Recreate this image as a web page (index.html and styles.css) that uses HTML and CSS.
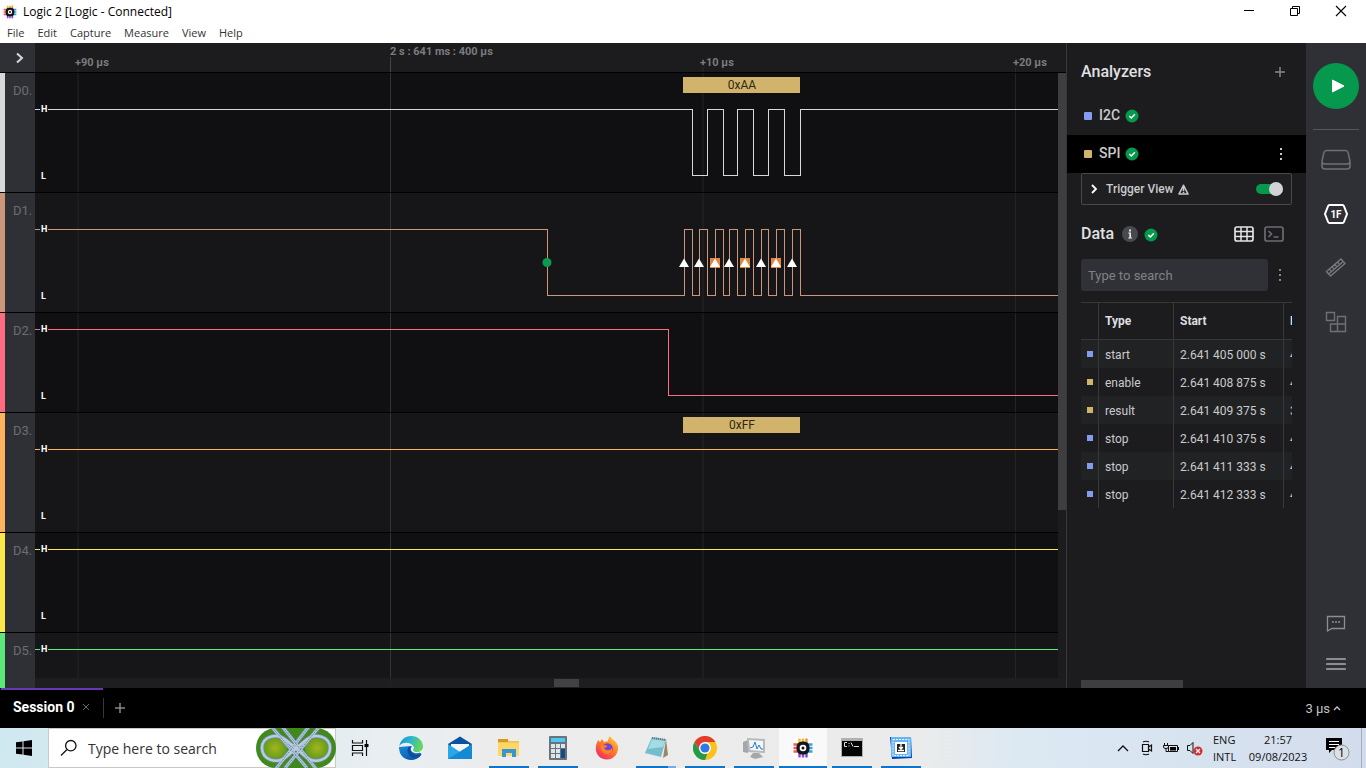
FILE: index.html
```html
<!DOCTYPE html>
<html lang="en">
<head>
<meta charset="utf-8">
<title>Logic 2 [Logic - Connected]</title>
<link rel="stylesheet" href="styles.css">
</head>
<body>
<svg class="defs" aria-hidden="true">
  <symbol id="logo" viewBox="0 0 24 24">
    <rect x="1" y="1" width="22" height="22" rx="5" fill="#fff" stroke="#ececec" stroke-width=".5"/>
    <path d="M8.500 2.500v5M12 2.500v5" stroke="#f3b52c" stroke-width="2.400"/><path d="M15.500 2.500v5" stroke="#ee8b2b" stroke-width="2.400"/>
    <path d="M8.500 16.500v5M12 16.500v5" stroke="#8e44d8" stroke-width="2.400"/><path d="M15.500 16.500v5" stroke="#6a4be0" stroke-width="2.400"/>
    <path d="M2.500 8.500h5M2.500 12h5M2.500 15.500h5" stroke="#ee5a4f" stroke-width="2.400"/>
    <path d="M16.500 8.500h5M16.500 12h5M16.500 15.500h5" stroke="#3a9fe0" stroke-width="2.400"/>
    <rect x="5.500" y="5.500" width="13" height="13" rx="5.500" fill="#16161a"/>
    <circle cx="12" cy="12" r="3.300" fill="#fff"/><circle cx="12" cy="12" r="1.500" fill="#16161a"/>
  </symbol>
  <symbol id="check" viewBox="0 0 14 14"><circle cx="7" cy="7" r="6.500" fill="#06984c"/><path d="M4.300 7l2 2 3.600-3.700" fill="none" stroke="#fff" stroke-width="1.500"/></symbol>
  <symbol id="dots" viewBox="0 0 4 14"><path d="M1 1h2v2H1zM1 6h2v2H1zM1 11h2v2H1z" fill="currentColor"/></symbol>
  <symbol id="plus" viewBox="0 0 12 12"><path d="M6 1v10M1 6h10" stroke="currentColor" stroke-width="1.500"/></symbol>
</svg>

<header class="titlebar">
  <svg class="title-logo"><use href="#logo"/></svg>
  <span class="title">Logic 2 [Logic - Connected]</span>
  <div class="window-buttons">
    <button aria-label="Minimize"><svg width="12" height="12"><path d="M1 5.500h10" stroke="#000"/></svg></button>
    <button aria-label="Restore"><svg width="12" height="12"><path d="M1.500 3.500h7v7h-7zM3.500 3.500v-2h7v7h-2" fill="none" stroke="#000"/></svg></button>
    <button aria-label="Close"><svg width="12" height="12"><path d="M1 1l10 10M11 1L1 11" stroke="#000" stroke-width="1.100"/></svg></button>
  </div>
</header>
<nav class="menubar"><button>File</button><button>Edit</button><button>Capture</button><button>Measure</button><button>View</button><button>Help</button></nav>

<main class="main">
  <section class="capture">
    <div class="ruler">
      <button class="expand" aria-label="Expand"><svg width="10" height="12"><path d="M2 1.500l5 4.500-5 4.500" fill="none" stroke="#d8d8da" stroke-width="2"/></svg></button>
      <svg class="ruler-scale">
        <path d="M43 25v5M668 25v5M980.500 25v5" stroke="#2b2b2d"/><path d="M355.500 14v16" stroke="#454548"/>
        <text x="40" y="23">+90 µs</text><text x="355" y="12">2 s : 641 ms : 400 µs</text><text x="665" y="23">+10 µs</text><text x="978" y="23">+20 µs</text>
      </svg>
    </div>
    <div class="channels">
      <div class="channel-list">
        <div class="channel tall c0">
          <div class="label">D0.</div>
          <svg class="lane"><path class="grid minor" d="M43 0v120M668 0v120M980.500 0v120"/><path class="grid" d="M355.500 0v120"/>
            <path class="wave" d="M0 36.500H657.500V102.500H672.500V36.500H688.500V102.500H702.500V36.500H718.500V102.500H733.500V36.500H749.500V102.500H765.500V36.500H4000"/>
            <rect class="gap" x="5" y="32" width="8" height="9"/><text class="level" x="6" y="39">H</text><text class="level" x="6" y="106">L</text>
            <rect x="648" y="4" width="117" height="16" fill="#d1b36b"/><text class="value" x="707" y="16">0xAA</text>
          </svg>
        </div>
        <div class="channel tall odd c1">
          <div class="label">D1.</div>
          <svg class="lane"><path class="grid minor" d="M43 0v120M668 0v120M980.500 0v120"/><path class="grid" d="M355.500 0v120"/>
            <path class="wave" d="M0 36.500H512.500V102.500H649.500V36.500H657.500V102.500H664.500V36.500H672.500V102.500H680.500V36.500H688.500V102.500H694.500V36.500H702.500V102.500H710.500V36.500H718.500V102.500H726.500V36.500H733.500V102.500H741.500V36.500H749.500V102.500H757.500V36.500H765.500V102.500H4000"/>
            <rect class="gap" x="5" y="32" width="8" height="9"/><text class="level" x="6" y="39">H</text><text class="level" x="6" y="106">L</text>
            <circle cx="512" cy="69.500" r="4.500" fill="#0a9a50"/>
            <path d="M675 65h10v10h-10zM705 65h10v10h-10zM736 65h10v10h-10z" fill="#e2873f"/>
            <path d="M649 65.500l5 8.500h-10zM664 65.500l5 8.500h-10zM680 65.500l5 8.500h-10zM694 65.500l5 8.500h-10zM710 65.500l5 8.500h-10zM726 65.500l5 8.500h-10zM741 65.500l5 8.500h-10zM757 65.500l5 8.500h-10z" fill="#fff"/>
          </svg>
        </div>
        <div class="channel c2">
          <div class="label">D2.</div>
          <svg class="lane"><path class="grid minor" d="M43 0v120M668 0v120M980.500 0v120"/><path class="grid" d="M355.500 0v120"/>
            <path class="wave" d="M0 16.500H633.500V82.500H4000"/>
            <rect class="gap" x="5" y="12" width="8" height="9"/><text class="level" x="6" y="19">H</text><text class="level" x="6" y="86">L</text>
          </svg>
        </div>
        <div class="channel tall odd c3">
          <div class="label">D3.</div>
          <svg class="lane"><path class="grid minor" d="M43 0v120M668 0v120M980.500 0v120"/><path class="grid" d="M355.500 0v120"/>
            <path class="wave" d="M0 36.500H4000"/>
            <rect class="gap" x="5" y="32" width="8" height="9"/><text class="level" x="6" y="39">H</text><text class="level" x="6" y="106">L</text>
            <rect x="648" y="4" width="117" height="16" fill="#d1b36b"/><text class="value" x="707" y="16">0xFF</text>
          </svg>
        </div>
        <div class="channel c4">
          <div class="label">D4.</div>
          <svg class="lane"><path class="grid minor" d="M43 0v120M668 0v120M980.500 0v120"/><path class="grid" d="M355.500 0v120"/>
            <path class="wave" d="M0 16.500H4000"/>
            <rect class="gap" x="5" y="12" width="8" height="9"/><text class="level" x="6" y="19">H</text><text class="level" x="6" y="86">L</text>
          </svg>
        </div>
        <div class="channel odd c5">
          <div class="label">D5.</div>
          <svg class="lane"><path class="grid minor" d="M43 0v120M668 0v120M980.500 0v120"/><path class="grid" d="M355.500 0v120"/>
            <path class="wave" d="M0 16.500H4000"/>
            <rect class="gap" x="5" y="12" width="8" height="9"/><text class="level" x="6" y="19">H</text>
          </svg>
        </div>
      </div>
      <div class="vscroll"><div class="vthumb"></div></div>
      <div class="hscroll"><div class="hthumb"></div></div>
    </div>
  </section>

  <aside class="sidebar">
    <div class="panel-head"><h2>Analyzers</h2><button aria-label="Add analyzer"><svg width="12" height="12"><use href="#plus"/></svg></button></div>
    <div class="analyzer"><span class="swatch blue"></span><span class="name">I2C</span><svg class="check"><use href="#check"/></svg></div>
    <div class="analyzer selected"><span class="swatch gold"></span><span class="name">SPI</span><svg class="check"><use href="#check"/></svg><button class="more" aria-label="SPI options"><svg width="4" height="14"><use href="#dots"/></svg></button></div>
    <div class="trigger">
      <svg width="8" height="10"><path d="M2 1l4 4-4 4" fill="none" stroke="#fff" stroke-width="1.800"/></svg>
      <label for="tv">Trigger View</label>
      <svg width="11" height="11"><path d="M5.500 1.300L10 10H1z" fill="none" stroke="#c9cacd" stroke-width="1.600" stroke-linejoin="round"/><path d="M5.500 4v3M5.500 7.800v1.200" stroke="#c9cacd" stroke-width="1.600"/></svg>
      <input class="switch" id="tv" type="checkbox" checked>
    </div>
    <div class="data-head">
      <h2>Data</h2>
      <svg width="16" height="16"><circle cx="8" cy="8" r="8" fill="#48494e"/><path d="M7 3.500h2v2H7zM6.300 6.500H9v5h1v1H6.300v-1H7.300v-4h-1z" fill="#e4e4e6"/></svg>
      <svg class="check low"><use href="#check"/></svg>
      <button class="view-table" aria-label="Table view"><svg width="20" height="16"><rect x="1" y="1" width="18" height="14" rx="2" fill="none" stroke="#e4e4e6" stroke-width="1.700"/><path d="M7 1v14M13 1v14M1 5.500h18M1 10.500h18" stroke="#e4e4e6" stroke-width="1.500"/></svg></button>
      <button aria-label="Terminal view"><svg width="20" height="16"><rect x="1" y="1" width="18" height="14" rx="2" fill="none" stroke="#6b6c72" stroke-width="1.700"/><path d="M4.500 5l3 3-3 3M9.500 11h5" fill="none" stroke="#6b6c72" stroke-width="1.600"/></svg></button>
    </div>
    <div class="search-row"><input type="text" placeholder="Type to search" aria-label="Type to search"><button aria-label="Search options"><svg width="4" height="14"><use href="#dots"/></svg></button></div>
    <div class="table-wrap">
      <table>
        <colgroup><col class="col-mark"><col class="col-type"><col class="col-start"><col class="col-duration"></colgroup>
        <thead><tr><th></th><th>Type</th><th>Start</th><th>Duration</th></tr></thead>
        <tbody>
          <tr><td><span class="mark blue"></span></td><td>start</td><td>2.641 405 000 s</td><td>4 ns</td></tr>
          <tr><td><span class="mark gold"></span></td><td>enable</td><td>2.641 408 875 s</td><td>4 ns</td></tr>
          <tr><td><span class="mark gold"></span></td><td>result</td><td>2.641 409 375 s</td><td>3 µs</td></tr>
          <tr><td><span class="mark blue"></span></td><td>stop</td><td>2.641 410 375 s</td><td>4 ns</td></tr>
          <tr><td><span class="mark blue"></span></td><td>stop</td><td>2.641 411 333 s</td><td>4 ns</td></tr>
          <tr><td><span class="mark blue"></span></td><td>stop</td><td>2.641 412 333 s</td><td>4 ns</td></tr>
        </tbody>
      </table>
    </div>
    <div class="side-scroll"></div>
  </aside>

  <nav class="rail">
    <button class="play" aria-label="Start capture"><svg width="16" height="16"><path d="M2.500 2L14 8 2.500 14z" fill="#fff" stroke="#fff" stroke-linejoin="round"/></svg></button>
    <hr>
    <button aria-label="Device"><svg width="32" height="24"><path d="M6.500 2.500h19q2 0 2.600 2l1.900 8.500v5q0 3-3 3H5q-3 0-3-3v-5L3.900 4.500q.6-2 2.600-2zM2 13.500q0 2.500 3 2.500h22q3 0 3-2.500" fill="none" stroke="#6f7076" stroke-width="1.500"/></svg></button>
    <button aria-label="Analyzers"><svg width="26" height="22"><path d="M6.500 2h13q1 0 1.400 1L24 11l-3.100 8q-.4 1-1.400 1h-13q-1 0-1.400-1L2 11 5.100 3q.4-1 1.400-1z" fill="none" stroke="#fff" stroke-width="2"/><text x="13" y="15" text-anchor="middle">1F</text></svg></button>
    <button aria-label="Measurements"><svg width="22" height="22"><path d="M1.500 14.500L16 2l4 4.500L5.500 19zM3.700 17L18.200 4.500M4.500 12l1.500 2M7.200 9.700l1.500 2M9.900 7.400l1.500 2M12.600 5l1.500 2" fill="none" stroke="#77787e" stroke-width="1.400"/></svg></button>
    <button aria-label="Extensions"><svg width="22" height="22"><path d="M1.500 1.500h8v8h-8zM12.500 5.500h8v7.500h-8zM12.500 13h8v7.500h-8zM5.500 13h7v7.500h-7z" fill="none" stroke="#6f7076" stroke-width="1.400"/></svg></button>
    <button class="chat" aria-label="Support"><svg width="20" height="18"><path d="M1.500 1.500h17v12H6L1.500 16z" fill="none" stroke="#8c8d92" stroke-width="1.300"/><path d="M6 7h2M9 7h2M12 7h2" stroke="#8c8d92" stroke-width="1.500"/></svg></button>
    <button aria-label="Menu"><svg width="20" height="14"><path d="M1 2h18M1 7h18M1 12h18" stroke="#8c8d92" stroke-width="2.200" stroke-linecap="round"/></svg></button>
  </nav>
</main>

<div class="sessions">
  <div class="tab"><span>Session 0</span><button aria-label="Close session"><svg width="8" height="8"><path d="M1 1l6 6M7 1L1 7" stroke="#66676c"/></svg></button></div>
  <button class="new-tab" aria-label="New session"><svg width="12" height="12"><use href="#plus"/></svg></button>
  <button class="scale">3 µs <svg width="8" height="6"><path d="M1 5l3-3 3 3" fill="none" stroke="#c4c4c6" stroke-width="1.300"/></svg></button>
</div>

<footer class="taskbar">
  <button class="start" aria-label="Start"><svg width="16" height="16"><path d="M0 2.300L6.500 1.400V7.500H0zM7.500 1.200L16 0v7.500H7.500zM0 8.500h6.500v6.100L0 13.700zM7.500 8.500H16V16l-8.500-1.200z"/></svg></button>
  <div class="search">
    <svg width="18" height="18"><circle cx="10.800" cy="6.700" r="5.200" fill="none" stroke="#111" stroke-width="1.300"/><path d="M7 10.500L1 16.500" stroke="#111" stroke-width="1.300"/></svg>
    <input type="text" placeholder="Type here to search" aria-label="Type here to search">
    <svg class="knot" viewBox="0 0 80 40">
      <defs><clipPath id="pill"><rect width="80" height="40" rx="20"/></clipPath><radialGradient id="field"><stop stop-color="#a3b51c"/><stop offset="1" stop-color="#5f9a1c"/></radialGradient></defs>
      <g clip-path="url(#pill)"><rect width="80" height="40" fill="#3f8a1a"/><circle cx="19" cy="20" r="12" fill="url(#field)"/><circle cx="61" cy="20" r="12" fill="url(#field)"/><path d="M40 10l8 12-8 10-8-10z" fill="#1f6b2c"/>
      <g fill="none" stroke="#6f8fae" stroke-width="4"><path d="M15 -2L51 40M29 40L64 -2M25 -3L61 42M19 42L54 -3"/><path d="M30 12C20 4 6 9 6 20s14 17 24 9L50 12C60 4 74 9 74 20S60 37 50 29L30 12"/></g>
      <g fill="none" stroke="#b9cbdc" stroke-width="2.500"><path d="M30 12C20 4 6 9 6 20s14 17 24 9L50 12C60 4 74 9 74 20S60 37 50 29L30 12"/><path d="M15 -2L51 40M29 40L64 -2M25 -3L61 42M19 42L54 -3"/></g>
      <path d="M15 -2L51 40M29 40L64 -2M25 -3L61 42M19 42L54 -3" fill="none" stroke="#5f7894" stroke-width=".8" stroke-dasharray="2 1"/></g>
    </svg>
  </div>
  <button class="task view" aria-label="Task View"><svg width="18" height="18"><path d="M1.500 1v3h10V1M1.500 17v-3h10v3M1.500 6.500h10v5h-10z" fill="none" stroke="#111" stroke-width="1.200"/><path d="M15.500 1v16" stroke="#111" stroke-width="1.200"/><path d="M13.500 5h4v3h-4z"/></svg></button>
  <button class="task" aria-label="Edge"><svg width="24" height="24" viewBox="0 0 24 24"><defs><linearGradient id="eg" x1="0" y1="0" x2="1" y2=".3"><stop stop-color="#1690d2"/><stop offset=".5" stop-color="#2bb6cc"/><stop offset="1" stop-color="#64d75c"/></linearGradient><linearGradient id="eb" x1="0" y1="0" x2=".6" y2="1"><stop stop-color="#168ddd"/><stop offset="1" stop-color="#0b5bad"/></linearGradient></defs><path d="M0 11c0 8 5 13 12 13 5 0 9-2.500 10.500-6L12 10z" fill="url(#eb)"/><path d="M.300 10C1.500 4 6 0 12 0c7 0 12 5 12 10.500 0 3.500-3 5.500-6 5.500-3 0-4.500-1-4-2.500 1-1 1-2 .5-3C12.500 6 3.500 5 .300 10z" fill="url(#eg)"/><path d="M9 12c-2 5 2 10 8 10 2.500-.500 4.500-2 5.500-4-4 2-10 1-11-4 0-1 .5-2 1-3-2-.5-3 .2-3.500 1z" fill="#0f4d9a"/><path d="M11.700 12.500c0 4 6 6.500 10.300 3.200-1 .5-7 1-8-1.700 0-.500 1.200-1.200.9-2.500-.9-1.700-3-.5-3.200 1z" fill="#eef2f5"/></svg></button>
  <button class="task" aria-label="Mail"><svg width="24" height="24"><path d="M0 8l12-7.500L24 8v4H0z" fill="#0b539c"/><path d="M3 8h18v9H3z" fill="#f4f8fb"/><path d="M0 8l12 8L24 8v15H0z" fill="#2aa7e7"/><path d="M0 23L24 8v15z" fill="#1689d5"/></svg></button>
  <button class="task open" aria-label="File Explorer"><svg width="24" height="24"><path d="M1 3h9l2 2h10v15H1z" fill="#f5c64d"/><path d="M1 3h10v3H1z" fill="#d79a1c"/><path d="M1 7h21v13H1z" fill="#ffd768"/><path d="M5 21v-8h14v8h-4v-4H9v4z" fill="#3596d6"/></svg></button>
  <button class="task open" aria-label="Calculator"><svg width="24" height="24"><rect x="3" width="18" height="24" rx="1" fill="#69737c"/><path d="M5 2h14v4H5z" fill="#4cc9f0"/><path d="M5 8h4v4H5zM10 8h4v4h-4zM15 8h4v4h-4zM5 13h4v4H5zM10 13h4v4h-4zM5 18h4v4H5zM10 18h4v4h-4z" fill="#dfe4e8"/><path d="M15 13h4v9h-4z" fill="#164a86"/></svg></button>
  <button class="task" aria-label="Firefox"><svg width="24" height="24"><defs><linearGradient id="ff" x1="1" y1="0" x2=".3" y2="1"><stop stop-color="#ffe04a"/><stop offset=".45" stop-color="#ff8a22"/><stop offset="1" stop-color="#f12d64"/></linearGradient></defs><path d="M3 4l2 2 2-3 2 3 4-1c0-2 1-4 2-5 1 3 6 4 8 10 1 7-4 13.500-11 13.500S.500 18 .800 12C.800 9 2 7 3 4z" fill="url(#ff)"/><circle cx="12.500" cy="12.500" r="5.300" fill="#7541d9"/><path d="M6 9l6 .500c1 1-1 2-3 2.500 2 3 6 3 8 0 1 4-2 6-5 6-4 0-7-4-6-9z" fill="#ff8124"/></svg></button>
  <button class="task open split" aria-label="Notepad"><svg width="24" height="24"><path d="M8 1l15 3-5 18-17-4z" fill="#e8eaec"/><path d="M22 3l2 16-5 3z" fill="#9a8668"/><path d="M8 1l14 2-5 18-16-4z" fill="#73bdcc"/><path d="M8 3l13 2-2 6-15 2z" fill="#a4dce4"/><path d="M8 2l14 2" stroke="#6d7377" stroke-width="2" stroke-dasharray="1 1"/></svg></button>
  <button class="task open" aria-label="Chrome"><svg width="24" height="24"><circle cx="12" cy="12" r="12" fill="#fbc116"/><path d="M1.600 6A12 12 0 0 1 22.400 6H12L7 15z" fill="#e33b2e"/><path d="M1.600 6l5.200 9a6 6 0 0 0 7.500 2.500L12 24A12 12 0 0 1 1.600 6z" fill="#229a4b"/><circle cx="12" cy="12" r="6" fill="#fff"/><circle cx="12" cy="12" r="4.600" fill="#2f78e6"/></svg></button>
  <button class="task open" aria-label="Performance Monitor"><svg width="24" height="24"><path d="M1 6l5-2v13l-5-1z" fill="#a4a7aa"/><path d="M5 2l18 1v14L6 16z" fill="#b7babd"/><path d="M7 4l14 1v10L8 14z" fill="#f1f6fb"/><path d="M8 12l3-1 2-5 2 7 2-4 2 4h2" fill="none" stroke="#3279c5"/><path d="M11 17h6l4 4-8 2-5-2z" fill="#a5a8aa"/></svg></button>
  <button class="task open active" aria-label="Logic 2"><svg width="24" height="24"><use href="#logo"/></svg></button>
  <button class="task open" aria-label="Command Prompt"><svg width="24" height="24"><path d="M1 2h22v19H1z" fill="#aeb1b3"/><path d="M2 5h20v15H2z" fill="#050505"/><path d="M7 6.500H4.500v4H7M9 7v1M9 9.500v1M11 6.500l2 4M14 10.500h5" fill="none" stroke="#ddd"/></svg></button>
  <button class="task open" aria-label="Chip Programmer"><svg width="24" height="24"><path d="M1 1h21l1 21-20 1z" fill="#0a3fae"/><path d="M2 1h20v20H2z" fill="#62b5f7"/><path d="M4 3.500h16v16H4z" fill="none" stroke="#e8f4ff" stroke-dasharray="2 1"/><path d="M6 6h12v12H6z" fill="#fff"/><path d="M8 8h8v8H8z" fill="#222"/><path d="M12 8v5M10 11l2 2 2-2M9 14.500h6" fill="none" stroke="#fff" stroke-width="1.300"/></svg></button>
  <div class="tray">
    <div class="tray-icons">
      <svg width="12" height="8"><path d="M1 7l5-5 5 5" fill="none" stroke="#111" stroke-width="1.300"/></svg>
      <svg width="12" height="16"><path d="M1.500 4.500h6v7h-6zM7.500 7l3-2v6l-3-2M2 2q3-1.500 6 0M2 14q3 1.500 6 0" fill="none" stroke="#111" stroke-width="1.200"/></svg>
      <svg width="16" height="12"><path d="M5.500 3.500h9v6h-9z" fill="none" stroke="#111"/><path d="M7 5h6v3.500H7zM15 5h1v3h-1z"/><path d="M1.500 1v2M4.500 1v2M.500 3.500h5v1.500q0 1.500-2.500 1.500T.500 5zM3 6.500v3h2.500" fill="none" stroke="#111"/></svg>
      <svg width="18" height="16"><path d="M1.500 5.500h2.500l3-3v11l-3-3H1.500z" fill="none" stroke="#111"/><circle cx="12" cy="11" r="4.500" fill="#d32b30"/><path d="M10 9l4 4M14 9l-4 4" stroke="#fff" stroke-width="1.200"/></svg>
    </div>
    <div class="lang">ENG<br>INTL</div>
    <div class="clock">21:57<br>09/08/2023</div>
    <button class="notify" aria-label="Notifications, 1 new"><svg width="26" height="26"><path d="M1 3h16v12H7l-3 3v-3H1z"/><path d="M4 6.500h10M4 9.500h10M4 12.500h6" stroke="#fff" stroke-width="1.200"/><circle cx="16.500" cy="17.500" r="7.500" fill="#dcdfe4" stroke="#8c8f94"/><text x="16.500" y="22" text-anchor="middle">1</text></svg></button>
    <div class="desktop-edge"></div>
  </div>
</footer>
</body>
</html>
```
FILE: styles.css
```css
* { box-sizing: border-box; }
html, body { height: 100%; }
body { margin: 0; display: flex; flex-direction: column; overflow: hidden; background: #000; font-family: Roboto, "Liberation Sans", sans-serif; color: #c9cacd; }
button { display: flex; align-items: center; justify-content: center; padding: 0; border: 0; background: none; color: inherit; font: inherit; }
svg { display: block; flex: none; }
h2 { margin: 0; font-size: 16px; line-height: 20px; font-weight: 500; color: #e0e0e2; }
.defs { position: absolute; width: 0; height: 0; }

.titlebar { flex: none; display: flex; align-items: center; height: 24px; padding-left: 2px; gap: 5px; background: #fff; color: #000; font: 12px/16px "Open Sans", "Noto Sans", sans-serif; }
.title-logo { width: 16px; height: 16px; }
.window-buttons { display: flex; margin: 0 2px 2px auto; height: 20px; }
.window-buttons button { width: 46px; }
.menubar { flex: none; display: flex; gap: 13px; height: 19px; padding: 0 7px 1px; background: #fff; color: #333; font: 11px/16px "Open Sans", "Noto Sans", sans-serif; }

.main { flex: 1; min-height: 0; display: flex; }
.capture { flex: 1; min-width: 0; display: flex; flex-direction: column; background: #1c1c1e; }
.ruler { flex: none; display: flex; height: 30px; border-bottom: 1px solid #000; background: #1c1c1e; }
.expand { width: 35px; background: #2f3035; }
.expand svg { margin-left: 4px; }
.ruler-scale { flex: 1; min-width: 0; height: 29px; fill: #7b7b80; font-size: 11px; font-weight: 700; }
.channels { flex: 1; min-height: 0; position: relative; display: flex; }
.channel-list { flex: 1; min-width: 0; overflow: hidden; }
.channel { display: flex; height: 100px; --lane: #101012; border-bottom: 1px solid #000; background: var(--lane); }
.channel.tall { height: 120px; }
.channel.odd { --lane: #161618; }
.label { flex: none; width: 35px; padding: 10px 0 0 8px; border-left: 5px solid var(--wave); background: #2f3035; color: #6b6c71; font-size: 13px; line-height: 16px; }
.lane { flex: 1; min-width: 0; height: 100%; }
.grid { stroke: #343437; }
.grid.minor { stroke: #242427; }
.wave { fill: none; stroke: var(--wave); shape-rendering: crispEdges; }
.gap { fill: var(--lane); }
.level { fill: #fff; font-size: 9px; font-weight: 700; }
.value { fill: #2e2817; font-size: 12px; text-anchor: middle; }
.c0 { --wave: #d8d8d8; }
.c1 { --wave: #cb967a; }
.c2 { --wave: #ff6b80; }
.c3 { --wave: #ffb35c; }
.c4 { --wave: #fbe84a; }
.c5 { --wave: #5de87c; }
.vscroll { flex: none; width: 8px; background: #1c1c1e; }
.vthumb { height: 71%; background: #3e3e40; }
.hscroll { position: absolute; left: 35px; right: 0; bottom: 0; height: 10px; padding-top: 1px; background: rgba(31, 31, 33, .9); }
.hthumb { width: 25px; height: 8px; margin-left: 50.350%; background: #424244; }

.sidebar { flex: none; width: 240px; display: flex; flex-direction: column; border-left: 1px solid #38383b; background: #1c1c1e; }
.panel-head { display: flex; align-items: center; justify-content: space-between; height: 58px; padding: 0 20px 0 14px; color: #85868b; }
.analyzer { display: flex; align-items: center; height: 38px; padding: 0 23px 0 17px; gap: 7px; font-size: 14px; font-weight: 500; }
.analyzer:not(.selected) { margin-top: -4px; }
.name { padding-bottom: 2px; }
.selected { background: #000; }
.swatch { width: 8px; height: 8px; border-radius: 1px; }
.blue { background: #829df0; }
.gold { background: #d1b36b; }
.check { width: 14px; height: 14px; margin-left: -2px; }
.low { margin-top: 2px; }
.more { margin-left: auto; }
.trigger { display: flex; align-items: center; flex: none; height: 32px; margin: 0 14px; padding: 0 8px; border: 1px solid #48494d; border-radius: 2px; background: #1f1f22; font-size: 12px; font-weight: 500; gap: 4px; }
.trigger label { margin-left: 4px; }
.switch { appearance: none; display: flex; align-items: center; justify-content: flex-end; width: 27px; height: 10px; margin: 0 0 0 auto; border-radius: 5px; background: #06984c; }
.switch::after { content: ""; width: 14px; height: 14px; border-radius: 50%; background: #d2d3d6; }
.data-head { display: flex; align-items: center; height: 54px; gap: 8px; padding: 4px 22px 0 14px; }
.view-table { margin: 0 2px 0 auto; }
.search-row { display: flex; height: 32px; padding: 0 24px 0 14px; gap: 10px; color: #85868b; }
.search-row input { flex: 1; min-width: 0; padding: 0 7px; border: 0; border-radius: 3px; background: #303136; color: #c9cacd; font: 13px Roboto, sans-serif; }
input::placeholder { color: #808186; opacity: 1; }
.table-wrap { margin: 11px 14px 0; overflow: hidden; border-top: 1px solid #38383b; }
table { width: 280px; table-layout: fixed; border-collapse: separate; border-spacing: 0; font-size: 12px; }
.col-mark { width: 18px; }
.col-type { width: 75px; }
.col-start { width: 110px; }
th, td { height: 28px; padding: 1px 6px 0; text-align: left; border-right: 1px solid #38383b; font-weight: 400; }
th { height: 37px; padding-top: 0; border-bottom: 1px solid #38383b; font-weight: 700; color: #dedee0; }
td:first-child { padding: 0 5px 0 6px; }
tbody tr:nth-child(odd) { background: #212224; }
.mark { display: block; width: 6px; height: 6px; }
.side-scroll { width: 102px; height: 8px; margin: auto 0 0 14px; background: #3e3e40; }

.rail { flex: none; width: 60px; display: flex; flex-direction: column; align-items: center; padding-top: 20px; background: #2f3035; }
.rail .play { width: 46px; height: 46px; border-radius: 50%; background: #06984c; }
.rail .play svg { margin-left: 3px; }
.rail hr { width: 46px; height: 1px; margin: 20px 0 3px; border: 0; background: #56575c; }
.rail button { width: 54px; height: 54px; flex: none; }
.rail text { fill: #fff; font-size: 10px; font-weight: 700; }
.rail .chat { margin-top: auto; }
.rail .chat, .rail .chat + button { height: 40px; }
.rail .chat + button { margin-bottom: 4px; }

.sessions { flex: none; display: flex; height: 40px; padding-left: 1px; background: #000; }
.tab { display: flex; align-items: center; gap: 7px; width: 102px; padding: 0 0 4px 12px; border-top: 2px solid #6638b6; color: #fff; font-size: 14px; font-weight: 700; }
.new-tab { width: 33px; height: 20px; margin-top: 10px; border-left: 1px solid #38383b; color: #85868b; }
.scale { gap: 3px; margin-left: auto; padding-right: 25px; color: #c4c4c6; font-size: 13px; }

.taskbar { flex: none; display: flex; height: 40px; background: linear-gradient(90deg, #d0e8f0 0, #e9eef1 29%, #ececec 36%, #ebebeb 67%, #dce9f3 75%, #d3dcec 100%); color: #111; font-family: "Open Sans", "Noto Sans", sans-serif; }
.start { width: 48px; }
.search { position: relative; display: flex; align-items: center; width: 288px; padding-left: 11px; gap: 10px; border: 1px solid #c8c8c8; background: #fff; }
.search input { width: 160px; padding: 0; border: 0; background: none; font: 14px "Open Sans", sans-serif; }
.search input::placeholder { color: #333; }
.knot { position: absolute; right: -1px; top: -1px; width: 80px; height: 40px; }
.task { flex: none; width: 49px; border-right: 1px solid transparent; background-clip: padding-box; }
.view { margin-right: 2px; }
.open { background: linear-gradient(#0f75c8, #0f75c8) center bottom / 40px 2px no-repeat; }
.split { background-image: linear-gradient(90deg, #0f75c8 80%, #76ade0 80%); }
.active { background: linear-gradient(#0f75c8, #0f75c8) center bottom / 100% 2px no-repeat #f9f9f9; background-clip: padding-box; }
.tray { display: flex; align-items: center; margin-left: auto; gap: 6px; font-size: 11px; line-height: 17px; }
.tray-icons { display: grid; grid-template-columns: repeat(4, 24px); place-items: center; }
.lang { width: 24px; }
.clock { width: 70px; margin-right: 6px; text-align: center; white-space: nowrap; }
.notify { width: 26px; margin-right: 4px; }
.notify text { font-size: 12px; }
.desktop-edge { width: 5px; height: 40px; border-left: 1px solid #a3adba; }
```
